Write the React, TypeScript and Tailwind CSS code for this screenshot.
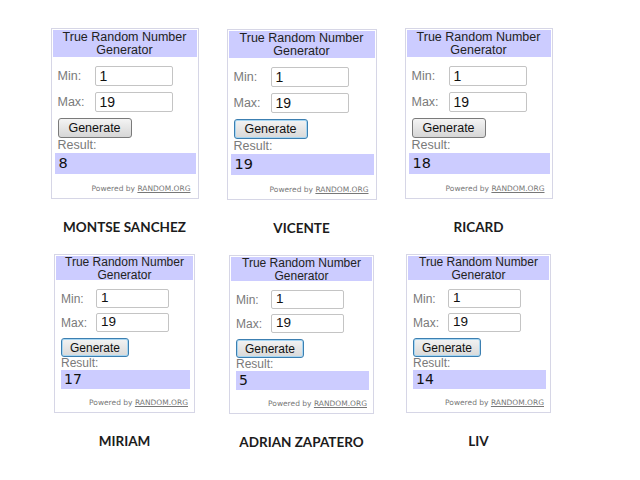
import React from 'react';

type Size = 'lg' | 'sm';

type Gen = {
  name: string;
  result: string;
  focused: boolean;
  width: string;
  offset: string;
};

const row1: Gen[] = [
  { name: 'MONTSE SANCHEZ', result: '8', focused: false, width: 'w-[148px]', offset: 'mt-0' },
  { name: 'VICENTE', result: '19', focused: true, width: 'w-[150px]', offset: 'mt-[1px]' },
  { name: 'RICARD', result: '18', focused: false, width: 'w-[148px]', offset: 'mt-0' },
];

const row2: Gen[] = [
  { name: 'MIRIAM', result: '17', focused: true, width: 'w-[141px]', offset: 'mt-0' },
  { name: 'ADRIAN ZAPATERO', result: '5', focused: true, width: 'w-[145px]', offset: 'mt-[1px]' },
  { name: 'LIV', result: '14', focused: true, width: 'w-[145px]', offset: 'mt-0' },
];

function Field({ label, value, size }: { label: string; value: string; size: Size }) {
  const lg = size === 'lg';
  return (
    <div className="flex items-center">
      <span className={lg ? 'w-[37px] text-[12.5px] text-[#7a7a7a]' : 'w-[35px] text-[12px] text-[#7a7a7a]'}>{label}</span>
      <div
        className={
          lg
            ? 'w-[78px] h-[20px] border border-[#c4c4c4] rounded-[2px] bg-white flex items-center pl-[4px] text-[14px] text-[#111]'
            : 'w-[73px] h-[19px] border border-[#c4c4c4] rounded-[2px] bg-white flex items-center pl-[4px] text-[13.5px] text-[#111]'
        }
      >
        {value}
      </div>
    </div>
  );
}

function Generator({ g, size }: { g: Gen; size: Size }) {
  const lg = size === 'lg';
  return (
    <div className={`${g.width} ${g.offset} border border-[#d6d6e6] bg-white p-[1px] flex flex-col`}>
      <div
        className={
          lg
            ? 'h-[27px] bg-[#ccccff] text-center text-[12.5px] leading-[13px] pt-[1px] text-[#222]'
            : 'h-[24px] bg-[#ccccff] text-center text-[12px] leading-[12.5px] text-[#222]'
        }
      >
        True Random Number
        <br />
        Generator
      </div>
      <div className={lg ? 'flex flex-col px-[5px] pt-[9px] gap-[6px]' : 'flex flex-col px-[5px] pt-[9px] gap-[5px]'}>
        <Field label="Min:" value="1" size={size} />
        <Field label="Max:" value="19" size={size} />
      </div>
      <div className="px-[5px] mt-[6px]">
        <div
          className={[
            lg ? 'w-[74px] h-[20px] text-[12.5px]' : 'w-[68px] h-[19px] text-[12px]',
            'flex items-center justify-center rounded-[3px] border text-[#111] bg-linear-to-b',
            g.focused
              ? 'border-[#3c7fb1] from-[#f3f3f3] to-[#d9d9d9] shadow-[inset_0_0_0_1px_#a7d6f2]'
              : 'border-[#7a7a7a] from-[#f4f4f4] to-[#d6d6d6]',
          ].join(' ')}
        >
          Generate
        </div>
      </div>
      <div className={lg ? 'px-[5px] h-[15px] text-[12.5px] leading-[15px] text-[#7a7a7a]' : 'px-[5px] h-[13px] text-[12px] leading-[13px] text-[#7a7a7a]'}>
        Result:
      </div>
      <div
        className={
          lg
            ? 'ml-[2px] mr-[1px] h-[21px] bg-[#ccccff] flex items-center pl-[4px] text-[14.5px] text-[#111] font-["DejaVu_Sans",sans-serif]'
            : 'ml-[5px] mr-[3px] h-[19px] bg-[#ccccff] flex items-center pl-[3px] text-[14px] text-[#111] font-["DejaVu_Sans",sans-serif]'
        }
      >
        {g.result}
      </div>
      <div
        className={
          lg
            ? 'mt-[10px] mb-[3px] h-[10px] pr-[6px] text-right text-[7.5px] leading-[10px] text-[#777] font-["DejaVu_Sans",sans-serif]'
            : 'mt-[9px] mb-[3px] h-[10px] pr-[5px] text-right text-[7.5px] leading-[10px] text-[#777] font-["DejaVu_Sans",sans-serif]'
        }
      >
        Powered by <span className="underline">RANDOM.ORG</span>
      </div>
    </div>
  );
}

function Row({ items, size, nameGap }: { items: Gen[]; size: Size; nameGap: string }) {
  return (
    <div className="grid grid-cols-[177px_177px_177px] items-start">
      {items.map((g) => (
        <div key={g.name} className="flex flex-col items-center">
          <Generator g={g} size={size} />
          <div className={`${nameGap} h-[20px] leading-[20px] text-[13.5px] font-bold text-[#1c1c1c] font-['Lato',sans-serif] whitespace-nowrap`}>
            {g.name}
          </div>
        </div>
      ))}
    </div>
  );
}

export default function App() {
  return (
    <div className="w-[640px] h-[480px] bg-white overflow-hidden pt-[28px] pl-[36px] font-['Liberation_Sans',Arial,sans-serif]">
      <Row items={row1} size="lg" nameGap="mt-[18px]" />
      <div className="mt-[16px]">
        <Row items={row2} size="sm" nameGap="mt-[18px]" />
      </div>
    </div>
  );
}
